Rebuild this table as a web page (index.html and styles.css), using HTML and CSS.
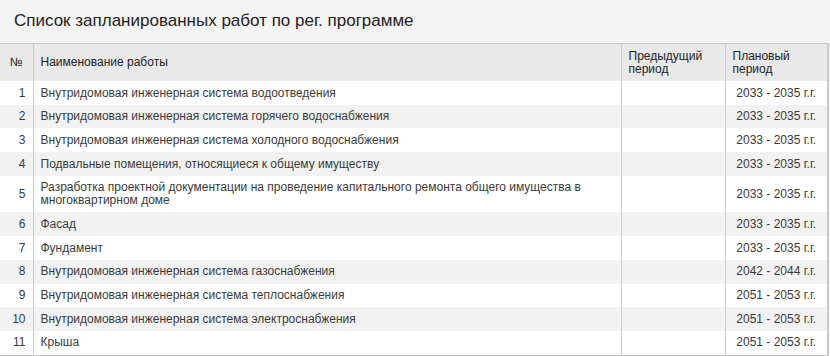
FILE: index.html
```html
<!DOCTYPE html>
<html lang="ru">
<head>
<meta charset="utf-8">
<link rel="stylesheet" href="styles.css">
</head>
<body>
<div class="panel">
  <h1 class="panel-title">Список запланированных работ по рег. программе</h1>
  <table class="works">
    <colgroup>
      <col class="c-num"><col class="c-name"><col class="c-prev"><col class="c-plan">
    </colgroup>
    <thead>
      <tr>
        <th class="num-h">№</th>
        <th>Наименование работы</th>
        <th>Предыдущий<br>период</th>
        <th>Плановый<br>период</th>
      </tr>
    </thead>
    <tbody>
      <tr><td class="num">1</td><td>Внутридомовая инженерная система водоотведения</td><td></td><td class="plan">2033 - 2035 г.г.</td></tr>
      <tr><td class="num">2</td><td>Внутридомовая инженерная система горячего водоснабжения</td><td></td><td class="plan">2033 - 2035 г.г.</td></tr>
      <tr><td class="num">3</td><td>Внутридомовая инженерная система холодного водоснабжения</td><td></td><td class="plan">2033 - 2035 г.г.</td></tr>
      <tr><td class="num">4</td><td>Подвальные помещения, относящиеся к общему имуществу</td><td></td><td class="plan">2033 - 2035 г.г.</td></tr>
      <tr><td class="num">5</td><td>Разработка проектной документации на проведение капитального ремонта общего имущества в многоквартирном доме</td><td></td><td class="plan">2033 - 2035 г.г.</td></tr>
      <tr><td class="num">6</td><td>Фасад</td><td></td><td class="plan">2033 - 2035 г.г.</td></tr>
      <tr><td class="num">7</td><td>Фундамент</td><td></td><td class="plan">2033 - 2035 г.г.</td></tr>
      <tr><td class="num">8</td><td>Внутридомовая инженерная система газоснабжения</td><td></td><td class="plan">2042 - 2044 г.г.</td></tr>
      <tr><td class="num">9</td><td>Внутридомовая инженерная система теплоснабжения</td><td></td><td class="plan">2051 - 2053 г.г.</td></tr>
      <tr><td class="num">10</td><td>Внутридомовая инженерная система электроснабжения</td><td></td><td class="plan">2051 - 2053 г.г.</td></tr>
      <tr><td class="num">11</td><td>Крыша</td><td></td><td class="plan">2051 - 2053 г.г.</td></tr>
    </tbody>
  </table>
</div>
</body>
</html>
```
FILE: styles.css
```css
html, body {
  margin: 0;
  padding: 0;
  background: #f4f4f4;
}
body {
  font-family: "Liberation Sans", Arial, sans-serif;
  color: #333;
}
.panel {
  width: 830px;
}
.panel-title {
  margin: 0;
  padding: 11px 14px 0;
  height: 32px;
  box-sizing: border-box;
  font-size: 17px;
  font-weight: normal;
  line-height: 20px;
  color: #222;
}
.works {
  width: 829px;
  border-collapse: collapse;
  table-layout: fixed;
  font-size: 12px;
  line-height: 13px;
  background: #fff;
  margin-top: 11px;
}
.c-num { width: 33px; }
.c-prev { width: 104px; }
.c-plan { width: 103px; }
.works thead tr {
  background: #e9e9e9;
  border-top: 1px solid #c6c6c6;
}
.works th {
  font-weight: normal;
  text-align: left;
  color: #222;
  padding: 5.5px 6px 5.5px 7px;
  vertical-align: middle;
  border-left: 1px solid #cacaca;
}
.works th:first-child,
.works td:first-child {
  border-left: 0;
}
.works th:last-child,
.works td:last-child {
  border-right: 2px solid #cacaca;
}
.works th.num-h {
  text-align: center;
  padding-left: 2px;
  padding-right: 2px;
}
.works td {
  padding: 5.5px 6px 5.2px 7px;
  vertical-align: middle;
  border-left: 1px solid #cacaca;
  color: #3a3a3a;
}
.works tbody tr:nth-child(even) {
  background: #f2f2f2;
}
.works tbody tr:last-child {
  border-bottom: 1px solid #c6c6c6;
}
.works td.num {
  text-align: right;
  padding-right: 7px;
  padding-left: 2px;
}
.works td.plan {
  text-align: center;
  padding-left: 2px;
  padding-right: 2px;
}
```
